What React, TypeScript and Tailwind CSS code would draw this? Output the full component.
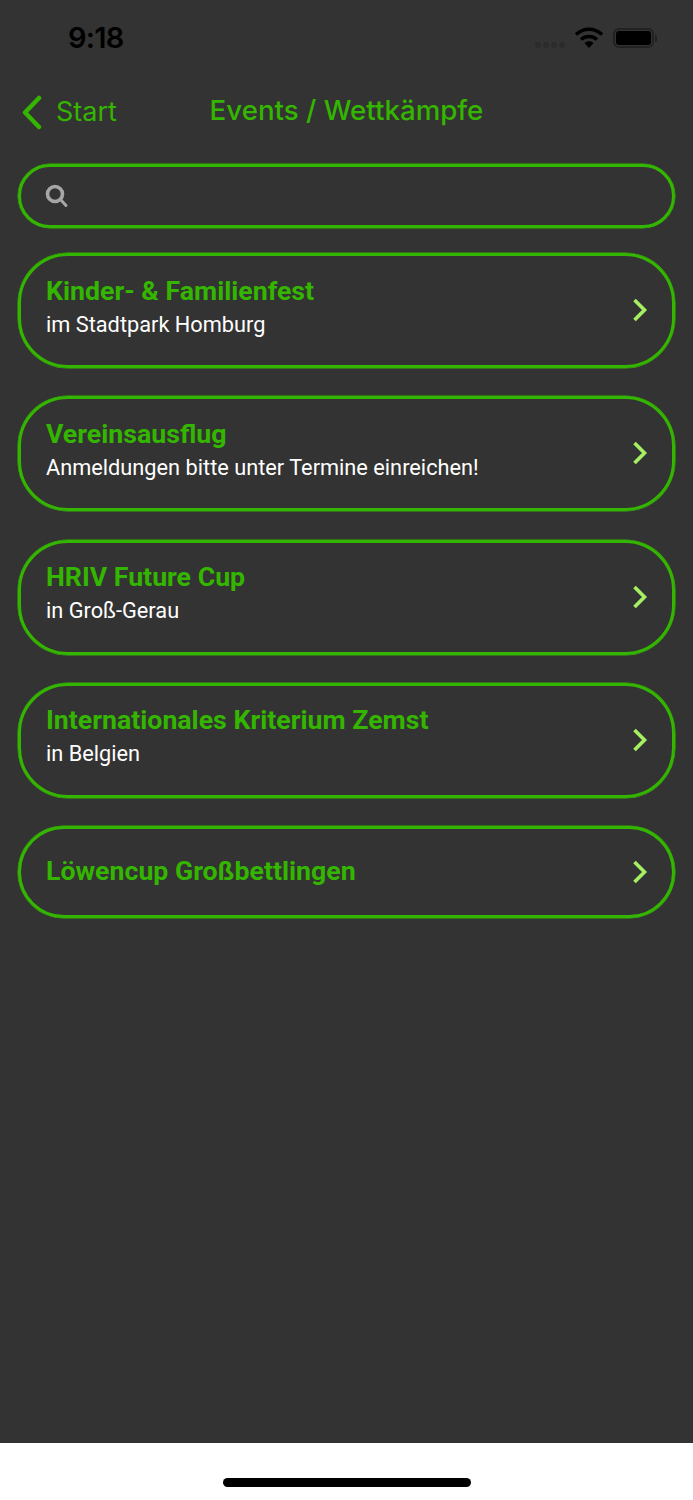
import React from 'react';

const events = [
  { title: 'Kinder- & Familienfest', subtitle: 'im Stadtpark Homburg' },
  { title: 'Vereinsausflug', subtitle: 'Anmeldungen bitte unter Termine einreichen!' },
  { title: 'HRIV Future Cup', subtitle: 'in Groß-Gerau' },
  { title: 'Internationales Kriterium Zemst', subtitle: 'in Belgien' },
  { title: 'Löwencup Großbettlingen' },
];

const StatusBar = () => (
  <div className="h-[76px] flex items-center justify-between pl-[68px] pr-[36px]">
    <span className="text-[29px] font-semibold text-black font-['Inter',sans-serif] tracking-[-0.8px]">9:18</span>
    <div className="flex items-center">
      <div className="flex gap-[2px] mt-[13px] mr-[10px]">
        <span className="w-[6px] h-[6px] rounded-full bg-[#2b2b2b]" />
        <span className="w-[6px] h-[6px] rounded-full bg-[#2b2b2b]" />
        <span className="w-[6px] h-[6px] rounded-full bg-[#2b2b2b]" />
        <span className="w-[6px] h-[6px] rounded-full bg-[#2b2b2b]" />
      </div>
      <svg width="28" height="22" viewBox="0 0 28 22" className="mr-[10px]">
        <path d="M1 7.5 C8.5 0.5 19.5 0.5 27 7.5" fill="none" stroke="#000" strokeWidth="3.4" />
        <path d="M6 12.5 C10.5 8.5 17.5 8.5 22 12.5" fill="none" stroke="#000" strokeWidth="3.4" />
        <path d="M9.5 16 C12 13.5 16 13.5 18.5 16 L14 21 Z" fill="#000" />
      </svg>
      <div className="w-[41px] h-[20px] rounded-[6px] border-2 border-[#222] p-[1px]">
        <div className="w-full h-full rounded-[3px] bg-black" />
      </div>
      <div className="w-[2px] h-[7px] ml-[1px] rounded-r-sm bg-[#222]" />
    </div>
  </div>
);

const NavBar = () => (
  <div className="relative h-[70px] flex items-center justify-center text-[#34b600] font-['Inter',sans-serif]">
    <div className="absolute left-[20px] top-[16px] flex items-center">
      <svg width="24" height="36" viewBox="0 0 24 36" fill="none">
        <path d="M19 4 L5 18.5 L19 33" stroke="#34b600" strokeWidth="4.5" strokeLinecap="round" strokeLinejoin="round" />
      </svg>
      <span className="ml-[12px] text-[27px] font-normal">Start</span>
    </div>
    <span className="text-[27.7px] font-medium">Events / Wettkämpfe</span>
  </div>
);

export default function App() {
  return (
    <div className="w-[693px] h-[1500px] flex flex-col bg-white font-['Roboto',sans-serif]">
      <div className="flex-1 bg-[#333333]">
        <StatusBar />
        <NavBar />
        <div className="px-[18px] pt-[18px] flex flex-col">
          <div className="h-[64px] rounded-[32px] border-[3px] border-[#34b600] shadow-[0_0_0_0.5px_#34b600] flex items-center pl-[24px]">
            <svg width="24" height="24" viewBox="0 0 24 24" fill="none" className="text-[#a6a6a6]">
              <circle cx="10" cy="10" r="7.5" stroke="currentColor" strokeWidth="3.6" />
              <path d="M15.5 15.5 L21 21.5" stroke="currentColor" strokeWidth="3" strokeLinecap="round" />
            </svg>
          </div>
          <div className="mt-[25px] flex flex-col gap-[28.3px]">
            {events.map((event) => (
              <div
                key={event.title}
                className={`${event.subtitle ? 'h-[115px] pb-[1px]' : 'h-[92px] pb-[1px]'} rounded-[50px] border-[3px] border-[#34b600] shadow-[0_0_0_0.5px_#34b600] flex items-center justify-between pl-[25px] pr-[24px]`}
              >
                <div className={event.subtitle ? 'pb-[6px]' : 'pb-[1px]'}>
                  <div className="text-[26.7px] leading-[34px] font-bold text-[#34b600]">{event.title}</div>
                  {event.subtitle && (
                    <div className="text-[21.75px] leading-[32px] mt-[1px] text-white">{event.subtitle}</div>
                  )}
                </div>
                <svg width="16" height="24" viewBox="0 0 16 24" fill="none">
                  <path d="M2.5 2 L12.5 12 L2.5 22" stroke="#a5ef62" strokeWidth="3.6" />
                </svg>
              </div>
            ))}
          </div>
        </div>
      </div>
      <div className="h-[57px] flex justify-center pt-[35px]">
        <div className="w-[248px] h-[9px] rounded-full bg-black" />
      </div>
    </div>
  );
}
